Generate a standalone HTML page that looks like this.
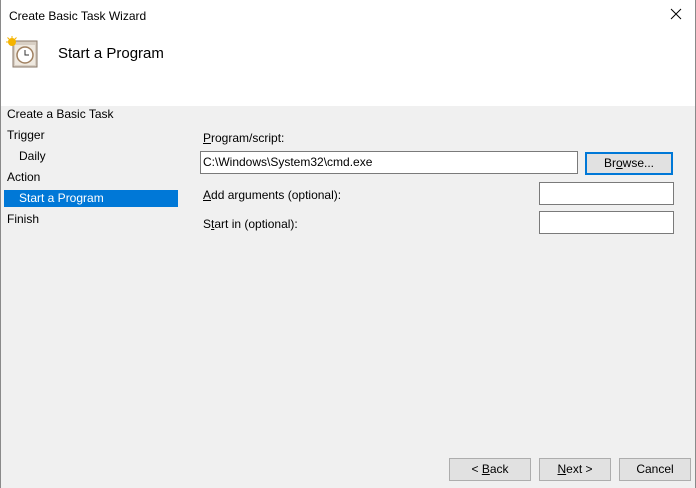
<!DOCTYPE html>
<html><head><style>
*{margin:0;padding:0;box-sizing:border-box}
body{width:696px;height:488px;overflow:hidden;font-family:"Liberation Sans",sans-serif;font-size:12px;color:#000;background:#f0f0f0;position:relative}
.win{position:absolute;left:0;top:0;width:696px;height:488px;border:1px solid #8a8a8a;border-top:none;border-bottom:none}
.hdr{position:absolute;left:1px;top:0;width:694px;height:106px;background:#fff}
.t{position:absolute;white-space:nowrap}
.box{position:absolute;background:#fff;border:1px solid #7a7a7a}
.btn{position:absolute;background:#e1e1e1;border:1px solid #adadad;text-align:center;line-height:21px}
u{text-decoration:underline}
</style></head><body>
<div class="win"></div>
<div class="hdr"></div>
<div class="t" style="left:9px;top:9px">Create Basic Task Wizard</div>
<svg class="t" style="left:670px;top:8px" width="12" height="12"><path d="M1 1L11 11M11 1L1 11" stroke="#000" stroke-width="1"/></svg>
<svg class="t" style="left:6px;top:36px" width="34" height="34">
<rect x="7" y="5" width="24" height="26" fill="#d8cfc4" stroke="#8a7a6a"/>
<rect x="9" y="9" width="20" height="20" fill="#efe9e0"/>
<circle cx="19" cy="19" r="8" fill="#fff" stroke="#a08060" stroke-width="1.5"/>
<path d="M19 14v5h4" stroke="#333" fill="none"/>
<circle cx="6" cy="6" r="4" fill="#f5b400"/>
<path d="M6 0v3M0 6h3M1.5 1.5l2 2M10.5 1.5l-2 2" stroke="#f5b400"/>
</svg>
<div class="t" style="left:58px;top:45px;font-size:15px">Start a Program</div>
<div class="t" style="left:7px;top:107px">Create a Basic Task</div>
<div class="t" style="left:7px;top:128px">Trigger</div>
<div class="t" style="left:19px;top:149px">Daily</div>
<div class="t" style="left:7px;top:170px">Action</div>
<div class="t" style="left:4px;top:190px;width:174px;height:17px;background:#0078d7"></div>
<div class="t" style="left:19px;top:191px;color:#fff">Start a Program</div>
<div class="t" style="left:7px;top:212px">Finish</div>
<div class="t" style="left:203px;top:131px"><u>P</u>rogram/script:</div>
<div class="box" style="left:200px;top:151px;width:378px;height:23px"></div>
<div class="t" style="left:203px;top:155px">C:\Windows\System32\cmd.exe</div>
<div class="btn" style="left:585px;top:152px;width:88px;height:23px;border:2px solid #0078d7;line-height:19px">Br<u>o</u>wse...</div>
<div class="t" style="left:203px;top:188px"><u>A</u>dd arguments (optional):</div>
<div class="box" style="left:539px;top:182px;width:135px;height:23px"></div>
<div class="t" style="left:203px;top:217px">S<u>t</u>art in (optional):</div>
<div class="box" style="left:539px;top:211px;width:135px;height:23px"></div>
<div class="btn" style="left:449px;top:458px;width:82px;height:23px">&lt; <u>B</u>ack</div>
<div class="btn" style="left:539px;top:458px;width:72px;height:23px"><u>N</u>ext &gt;</div>
<div class="btn" style="left:619px;top:458px;width:72px;height:23px">Cancel</div>
</body></html>
